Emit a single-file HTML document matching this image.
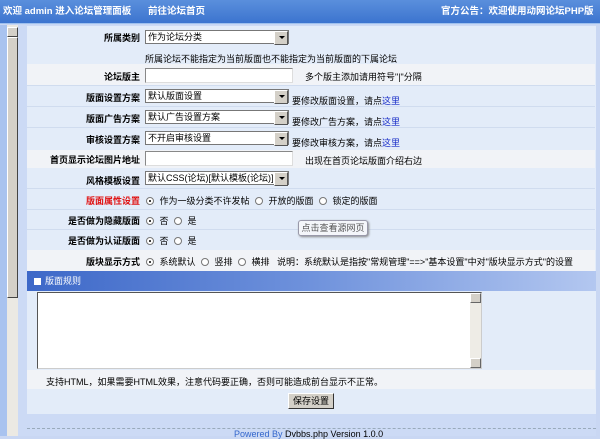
<!DOCTYPE html><html><head><meta charset="utf-8"><style>
*{margin:0;padding:0;box-sizing:border-box}
body{width:600px;height:436px;overflow:hidden;background:#c9d7f3;font-family:"Liberation Sans","Noto Sans CJK SC","WenQuanYi Zen Hei",sans-serif;font-size:9px;color:#000;position:relative}
.a{position:absolute}
.hd{left:0;top:0;width:600px;height:24px;background:linear-gradient(#5a8fdc,#3c74cf);color:#fff;font-weight:bold;font-size:9.5px;line-height:24px;border-bottom:1px solid #9ec0ee}
.lbl{position:absolute;right:460px;text-align:right;font-weight:bold;white-space:nowrap}
.row{position:absolute;left:27px;width:568px}
.sel{position:absolute;left:145px;height:14px;border:1px solid #777;background:#fff;font-size:9px;line-height:12px;padding-left:2px}
.sel:after{content:"";position:absolute;right:0;top:0;width:12px;height:12px;background:#d4d0c8;border:1px solid #fff;border-right-color:#555;border-bottom-color:#555}
.sel i{position:absolute;right:3px;top:5px;border-left:3px solid transparent;border-right:3px solid transparent;border-top:3px solid #000;z-index:2}
.inp{position:absolute;left:145px;width:148px;height:15px;background:#fff;border:1px solid #888;border-right-color:#ddd;border-bottom-color:#ddd}
.t{position:absolute;white-space:nowrap}
.r{display:inline-block;width:8px;height:8px;border-radius:50%;border:1px solid #777;background:#fff;vertical-align:-1px;margin:0 3px;position:relative}
.r.on:after{content:"";position:absolute;left:2px;top:2px;width:2px;height:2px;background:#000;border-radius:50%}
a{color:#1a2ec8;text-decoration:none}
</style></head><body>
<div class="a hd"><span style="position:absolute;left:3px">欢迎 admin 进入论坛管理面板</span><span style="position:absolute;left:148px">前往论坛首页</span><span style="position:absolute;left:441px">官方公告：欢迎使用动网论坛PHP版本</span></div>
<div class="a" style="left:0;top:25px;width:7px;height:411px;background:#a9c3ef"></div>
<div class="a" style="left:7px;top:25px;width:11px;height:411px;background:#ebe9e3"></div>
<div class="a" style="left:7px;top:27px;width:11px;height:10px;background:#d4d0c8;border:1px solid #fff;border-right-color:#444;border-bottom-color:#444"></div>
<div class="a" style="left:7px;top:37px;width:11px;height:261px;background:#d4d0c8;border:1px solid #fff;border-right-color:#444;border-bottom-color:#444"></div>
<div class="a" style="left:18px;top:25px;width:578px;height:411px;background:#ccdaf5"></div>
<div class="a" style="left:27px;top:26px;width:569px;height:388px;background:#e3ecf9"></div>
<!-- rows -->
<div class="row" style="top:64px;height:21px;background:#f1f3f7"></div>
<div class="row" style="top:150px;height:18px;background:#f1f3f7"></div>
<div class="row" style="top:250px;height:21px;background:#f1f3f7"></div>
<div class="row" style="top:370px;height:19px;background:#f1f3f7"></div>
<div class="row" style="top:85px;height:1px;background:#d0dcef"></div>
<div class="row" style="top:106px;height:1px;background:#d0dcef"></div>
<div class="row" style="top:127px;height:1px;background:#d0dcef"></div>
<div class="row" style="top:188px;height:1px;background:#d0dcef"></div>
<div class="row" style="top:209px;height:1px;background:#d0dcef"></div>
<div class="row" style="top:229px;height:1px;background:#d0dcef"></div>

<div class="lbl" style="top:31px">所属类别</div><div class="sel" style="top:30px;width:144px">作为论坛分类<i></i></div>
<div class="t" style="left:145px;top:52px">所属论坛不能指定为当前版面也不能指定为当前版面的下属论坛</div>
<div class="lbl" style="top:70px">论坛版主</div><div class="inp" style="top:68px"></div><div class="t" style="left:305px;top:70px">多个版主添加请用符号"|"分隔</div>
<div class="lbl" style="top:91px">版面设置方案</div><div class="sel" style="top:89px;width:144px">默认版面设置<i></i></div><div class="t" style="left:292px;top:94px">要修改版面设置，请点<a>这里</a></div>
<div class="lbl" style="top:112px">版面广告方案</div><div class="sel" style="top:110px;width:144px">默认广告设置方案<i></i></div><div class="t" style="left:292px;top:115px">要修改广告方案，请点<a>这里</a></div>
<div class="lbl" style="top:133px">审核设置方案</div><div class="sel" style="top:131px;width:144px">不开启审核设置<i></i></div><div class="t" style="left:292px;top:136px">要修改审核方案，请点<a>这里</a></div>
<div class="lbl" style="top:153px">首页显示论坛图片地址</div><div class="inp" style="top:151px"></div><div class="t" style="left:305px;top:154px">出现在首页论坛版面介绍右边</div>
<div class="lbl" style="top:174px">风格模板设置</div><div class="sel" style="top:171px;width:144px">默认CSS(论坛)[默认模板(论坛)]<i></i></div>
<div class="lbl" style="top:194px;color:#e01010">版面属性设置</div><div class="t" style="left:143px;top:194px"><span class="r on"></span> 作为一级分类不许发帖 <span class="r"></span> 开放的版面 <span class="r"></span> 锁定的版面</div>
<div class="lbl" style="top:214px">是否做为隐藏版面</div><div class="t" style="left:143px;top:214px"><span class="r on"></span> 否 <span class="r"></span> 是</div>
<div class="lbl" style="top:234px">是否做为认证版面</div><div class="t" style="left:143px;top:234px"><span class="r on"></span> 否 <span class="r"></span> 是</div>
<div class="a" style="left:298px;top:220px;width:70px;height:16px;background:#f4f6fa;border:1px solid #99a;border-radius:3px;box-shadow:1px 1px 2px #888;color:#555;line-height:14px;text-align:center">点击查看源网页</div>
<div class="lbl" style="top:255px">版块显示方式</div><div class="t" style="left:143px;top:255px"><span class="r on"></span> 系统默认 <span class="r"></span> 竖排 <span class="r"></span> 横排 &nbsp;&nbsp;说明：系统默认是指按"常规管理"==>"基本设置"中对"版块显示方式"的设置</div>
<div class="a" style="left:27px;top:271px;width:569px;height:20px;background:linear-gradient(90deg,#3d68c8,#6f92dc 50%,#b3c7f0);color:#fff;line-height:20px;padding-left:7px"><span style="display:inline-block;width:7px;height:7px;background:#fff;vertical-align:-1px;margin-right:4px"></span>版面规则</div>
<div class="a" style="left:37px;top:292px;width:445px;height:77px;background:#fff;border:1px solid #555;border-right-color:#ccc;border-bottom-color:#ccc"></div>
<div class="a" style="left:470px;top:293px;width:11px;height:75px;background:#eeece6"></div>
<div class="a" style="left:470px;top:293px;width:11px;height:10px;background:#d4d0c8;border:1px solid #fff;border-right-color:#666;border-bottom-color:#666"></div>
<div class="a" style="left:470px;top:358px;width:11px;height:10px;background:#d4d0c8;border:1px solid #fff;border-right-color:#666;border-bottom-color:#666"></div>
<div class="t" style="left:46px;top:375px">支持HTML，如果需要HTML效果，注意代码要正确，否则可能造成前台显示不正常。</div>
<div class="a" style="left:288px;top:393px;width:46px;height:16px;background:#d4d0c8;border:1px solid #fff;border-right-color:#333;border-bottom-color:#333;text-align:center;line-height:14px">保存设置</div>
<div class="a" style="left:27px;top:428px;width:569px;border-top:1px dashed #9ab"></div>
<div class="t" style="left:234px;top:429px;color:#36c;font-size:9px">Powered By <span style="color:#000">Dvbbs.php Version 1.0.0</span></div>
</body></html>
